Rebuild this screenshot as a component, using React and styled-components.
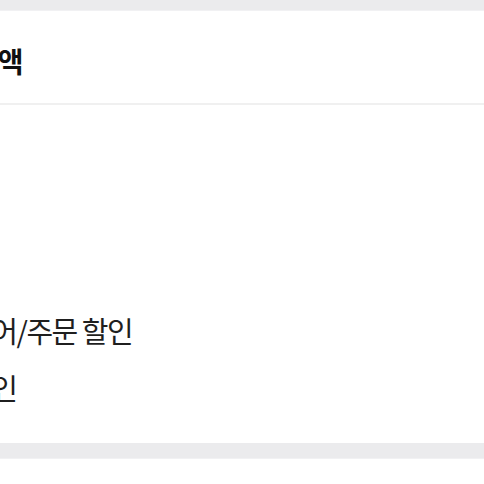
import React from "react";
import styled, { createGlobalStyle } from "styled-components";

const GlobalStyle = createGlobalStyle`
  html, body {
    margin: 0;
    padding: 0;
    background: #ebebed;
    overflow: hidden;
  }
  body {
    font-family: "Noto Sans CJK KR", "Noto Sans", sans-serif;
    color: #222;
  }
`;

const Page = styled.div`
  display: flex;
  flex-direction: column;
  padding-top: 10px;
  height: 484px;
  box-sizing: border-box;
`;

const Card = styled.section`
  background: #fff;
  margin-left: -80px;
  flex: ${(p) => (p.$grow ? 1 : "none")};
  height: ${(p) => (p.$h ? p.$h + "px" : "auto")};
  box-sizing: border-box;
  border-top: 1px solid #f1f1f3;
`;

const Header = styled.div`
  height: 94px;
  border-bottom: 2px solid #f0f0f0;
  box-sizing: border-box;
  display: flex;
  align-items: center;
  padding: 8px 0 0 5px;
`;

const Title = styled.h2`
  margin: 0;
  font-size: 28px;
  font-weight: 700;
  color: #111;
  letter-spacing: -1.5px;
`;

const List = styled.ul`
  list-style: none;
  margin: 0;
  padding: 205px 0 0 21px;
  display: flex;
  flex-direction: column;
  gap: 17px;
`;

const Item = styled.li`
  font-size: 29px;
  line-height: 40px;
  letter-spacing: -1.5px;
  color: #1f1f1f;
`;

const Gap = styled.div`
  height: 15px;
  flex: none;
`;

export default function App() {
  return (
    <>
      <GlobalStyle />
      <Page>
        <Card $h={433}>
          <Header>
            <Title>결제금액</Title>
          </Header>
          <List>
            <Item>스토어/주문 할인</Item>
            <Item>총할인</Item>
          </List>
        </Card>
        <Gap />
        <Card $grow />
      </Page>
    </>
  );
}
